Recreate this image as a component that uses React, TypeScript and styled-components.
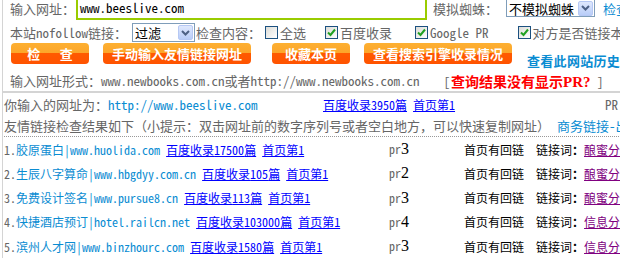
import React from "react";
import styled, { createGlobalStyle } from "styled-components";

const MONO = `"Noto Sans Mono CJK SC", "Noto Sans CJK SC", "Liberation Mono", monospace`;

const GlobalStyle = createGlobalStyle`
  html, body {
    margin: 0;
    padding: 0;
    background: #fff;
    overflow: hidden;
  }
  body {
    font-family: ${MONO};
    font-size: 13px;
    color: #666;
  }
`;

const rows = [
  { no: 1, name: "胶原蛋白", url: "www.huolida.com", count: "17500", pr: 3, word: "酿蜜分类" },
  { no: 2, name: "生辰八字算命", url: "www.hbgdyy.com.cn", count: "105", pr: 2, word: "酿蜜分类" },
  { no: 3, name: "免费设计签名", url: "www.pursue8.cn", count: "113", pr: 3, word: "酿蜜分类" },
  { no: 4, name: "快捷酒店预订", url: "hotel.railcn.net", count: "103000", pr: 4, word: "信息分类" },
  { no: 5, name: "滨州人才网", url: "www.binzhourc.com", count: "1580", pr: 3, word: "信息分类" },
];

const Checkbox: React.FC<{ checked?: boolean }> = ({ checked }) => (
  <Box>
    {checked && (
      <svg width="9" height="9" viewBox="0 0 9 9">
        <path d="M1 4.5 L3.5 7 L8 1.5" fill="none" stroke="#21a121" strokeWidth="2" />
      </svg>
    )}
  </Box>
);

const Select: React.FC<{ value: string; width: number; height: number }> = ({
  value,
  width,
  height,
}) => (
  <SelectBox $w={width} $h={height}>
    <SelectText>{value}</SelectText>
    <SelectArrow>
      <svg width="9" height="6" viewBox="0 0 9 6">
        <path d="M1 1 L4.5 4.5 L8 1" fill="none" stroke="#4d6185" strokeWidth="2" />
      </svg>
    </SelectArrow>
  </SelectBox>
);

export default function App() {
  return (
    <>
      <GlobalStyle />
      <Page>
        <TopPanel>
          <InputRow>
            <Label>输入网址：</Label>
            <UrlInput>www.beeslive.com</UrlInput>
            <Label $ml={6}>模拟蜘蛛：</Label>
            <Spacer $w={8} />
            <Select value="不模拟蜘蛛" width={89} height={18} />
            <BlueText $ml={8}>检查</BlueText>
          </InputRow>

          <OptionRow>
            <Label>本站nofollow链接：</Label>
            <Spacer $w={5} />
            <Select value="过滤" width={63} height={19} />
            <Label $ml={1}>检查内容：</Label>
            <CheckItem $ml={4}>
              <Checkbox />
              全选
            </CheckItem>
            <CheckItem $ml={19}>
              <Checkbox checked />
              百度收录
            </CheckItem>
            <CheckItem $ml={23}>
              <Checkbox checked />
              Google PR
            </CheckItem>
            <CheckItem $ml={29}>
              <Checkbox checked />
              对方是否链接本站
            </CheckItem>
          </OptionRow>

          <ButtonRow>
            <OrangeButton $w={78} $ml={1}>检　 查</OrangeButton>
            <OrangeButton $w={148} $ml={14}>手动输入友情链接网址</OrangeButton>
            <OrangeButton $w={78} $ml={21}>收藏本页</OrangeButton>
            <OrangeButton $w={148} $ml={14}>查看搜索引擎收录情况</OrangeButton>
            <HistoryLink>查看此网站历史记录</HistoryLink>
          </ButtonRow>

          <FormatRow>
            <span>输入网址形式：www.newbooks.com.cn或者http://www.newbooks.com.cn</span>
            <Hint>
              [<RedText>查询结果没有显示<Serif>PR?</Serif></RedText> ]
            </Hint>
          </FormatRow>
        </TopPanel>

        <ResultPanel>
          <InfoRow>
            <Cell $w={319}>
              你输入的网址为：<BlueText>http://www.beeslive.com</BlueText>
            </Cell>
            <SmallCell $w={282}>
              <Link>百度收录3950篇</Link> <Link>首页第1</Link>
            </SmallCell>
            <span>PR</span>
          </InfoRow>

          <TipRow>
            友情链接检查结果如下（小提示：双击网址前的数字序列号或者空白地方，可以快速复制网址）
            <BlueText $ml={7}>商务链接-出售</BlueText>
          </TipRow>

          <Divider />

          {rows.map((r) => (
            <ResultRow key={r.no}>
              <SmallCell $w={385}>
                {r.no}.<SiteName>
                  {r.name}|{r.url}
                </SiteName>{" "}
                <Link>百度收录{r.count}篇</Link> <Link>首页第1</Link>
              </SmallCell>
              <SmallCell $w={75}>
                pr<PrDigit>{r.pr}</PrDigit>
              </SmallCell>
              <SmallCell $w={72} $dark>
                首页有回链
              </SmallCell>
              <SmallCell $dark>
                链接词<b>：</b>
                <VisitedLink>{r.word}</VisitedLink>
              </SmallCell>
            </ResultRow>
          ))}
        </ResultPanel>
      </Page>
    </>
  );
}

const Page = styled.div`
  margin: -4px 0 0 2px;
  width: 720px;
  border-left: 1px solid #d4d4d4;
`;

const TopPanel = styled.div`
  padding-left: 7px;
  border-bottom: 2px solid #d4d4d4;
`;

const InputRow = styled.div`
  display: flex;
  align-items: center;
  height: 24px;
  white-space: nowrap;
`;

const OptionRow = styled.div`
  display: flex;
  align-items: center;
  height: 21px;
  margin-top: 2px;
  white-space: nowrap;
`;

const ButtonRow = styled.div`
  display: flex;
  align-items: flex-start;
  height: 21px;
  white-space: nowrap;
`;

const FormatRow = styled.div`
  display: flex;
  align-items: center;
  height: 21px;
  margin-top: 6px;
  white-space: nowrap;
`;

const Label = styled.span<{ $ml?: number }>`
  margin-left: ${({ $ml }) => $ml || 0}px;
  color: #666;
`;

const Spacer = styled.span<{ $w: number }>`
  width: ${({ $w }) => $w}px;
  flex: none;
`;

const UrlInput = styled.div`
  box-sizing: border-box;
  width: 351px;
  height: 24px;
  margin-left: 1px;
  padding: 0 2px;
  border: 2px solid #99cc00;
  color: #000;
  line-height: 20px;
`;

const SelectBox = styled.div<{ $w: number; $h: number }>`
  box-sizing: border-box;
  display: flex;
  align-items: center;
  justify-content: space-between;
  width: ${({ $w }) => $w}px;
  height: ${({ $h }) => $h}px;
  padding: 0 1px 0 2px;
  border: 1px solid #7f9db9;
  background: #fff;
  color: #000;
`;

const SelectText = styled.span`
  line-height: 1;
`;

const SelectArrow = styled.span`
  box-sizing: border-box;
  display: flex;
  align-items: center;
  justify-content: center;
  width: 15px;
  height: 15px;
  border: 1px solid #b6c8f4;
  border-radius: 2px;
  background: linear-gradient(to bottom, #dfe8fd, #b9cdf8);
`;

const CheckItem = styled.span<{ $ml: number }>`
  display: flex;
  align-items: center;
  gap: 2px;
  margin-left: ${({ $ml }) => $ml}px;
  color: #666;
`;

const Box = styled.span`
  box-sizing: border-box;
  display: flex;
  align-items: center;
  justify-content: center;
  width: 13px;
  height: 13px;
  border: 1px solid #1c5180;
  background: linear-gradient(135deg, #dcdcd7, #ffffff);
`;

const OrangeButton = styled.div<{ $w: number; $ml: number }>`
  box-sizing: border-box;
  width: ${({ $w }) => $w}px;
  height: 21px;
  margin-left: ${({ $ml }) => $ml}px;
  border-radius: 4px;
  background: linear-gradient(
    to bottom,
    #fdb032 0,
    #fca52a 48%,
    #ff5a00 48%,
    #ff5300 100%
  );
  color: #fff;
  font-weight: bold;
  text-align: center;
  line-height: 21px;
`;

const HistoryLink = styled.span`
  margin: 10px 0 0 15px;
  color: #0a8cd2;
  font-weight: bold;
  letter-spacing: 0.3px;
  line-height: 15px;
`;

const Hint = styled.span`
  margin-left: 24px;
  color: #666;
`;

const RedText = styled.b`
  margin-left: 1px;
  color: #f00;
  font-size: 14px;
`;

const Serif = styled.span`
  font-family: "Liberation Serif", serif;
  font-size: 15px;
`;

const BlueText = styled.span<{ $ml?: number }>`
  margin-left: ${({ $ml }) => $ml || 0}px;
  color: #0a8cd2;
`;

const ResultPanel = styled.div`
  padding-left: 1px;
`;

const InfoRow = styled.div`
  display: flex;
  align-items: center;
  height: 18px;
  margin-top: 2px;
  white-space: nowrap;
`;

const TipRow = styled.div`
  height: 18px;
  margin-top: 4px;
  line-height: 18px;
  white-space: nowrap;
`;

const Divider = styled.div`
  margin-top: 1px;
  border-top: 1px dotted #999;
`;

const Cell = styled.span<{ $w?: number }>`
  flex: none;
  width: ${({ $w }) => ($w ? `${$w}px` : "auto")};
`;

const SmallCell = styled.span<{ $w?: number; $dark?: boolean }>`
  flex: none;
  width: ${({ $w }) => ($w ? `${$w}px` : "auto")};
  font-size: 12px;
  color: ${({ $dark }) => ($dark ? "#000" : "#666")};
`;

const ResultRow = styled.div`
  display: flex;
  align-items: center;
  height: 24.25px;
  white-space: nowrap;
`;

const SiteName = styled.span`
  color: #0a8cd2;
`;

const Link = styled.a`
  color: #0000ff;
  text-decoration: underline;
  cursor: pointer;
`;

const VisitedLink = styled(Link)`
  color: #800080;
`;

const PrDigit = styled.span`
  font-family: "Liberation Serif", serif;
  font-size: 16px;
  color: #000;
`;
